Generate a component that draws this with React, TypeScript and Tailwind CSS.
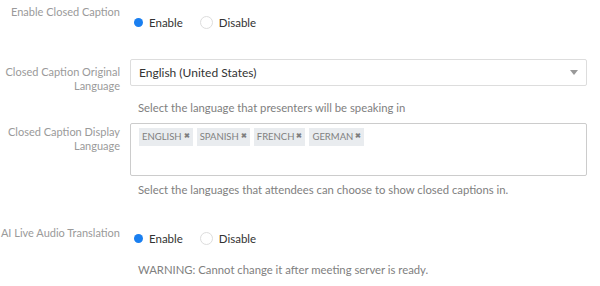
const tags = ['ENGLISH', 'SPANISH', 'FRENCH', 'GERMAN']

function Radio({ checked, label }: { checked?: boolean; label: string }) {
  return (
    <label className="flex items-center gap-[6px] text-[11.5px] text-[#333]">
      {checked ? (
        <span className="w-[9px] h-[9px] rounded-full bg-[#1a7ff0]" />
      ) : (
        <span className="w-[13px] h-[13px] rounded-full border border-[#ddd] bg-white" />
      )}
      {label}
    </label>
  )
}

function Label({ children }: { children: React.ReactNode }) {
  return (
    <div className="w-[120px] shrink-0 text-right whitespace-nowrap text-[11px] leading-[14px] text-[#9a9a9a]">
      {children}
    </div>
  )
}

export default function App() {
  return (
    <div className="w-[600px] h-[286px] bg-white font-['Lato',sans-serif] relative">
      <div className="flex pt-[5px]">
        <Label>Enable Closed Caption</Label>
        <div className="flex items-center gap-[17px] pl-[14px] pt-[9px]">
          <Radio checked label="Enable" />
          <Radio label="Disable" />
        </div>
      </div>

      <div className="flex items-start pt-[28px]">
        <div className="pt-[6px]">
          <Label>
            Closed Caption Original
            <br />
            Language
          </Label>
        </div>
        <div className="ml-[10px] w-[457px]">
          <div className="h-[27px] border border-[#ddd] rounded-[2px] flex items-center justify-between px-[8px] text-[12px] text-[#333]">
            <span>English (United States)</span>
            <span className="w-0 h-0 border-l-[4px] border-r-[4px] border-t-[5px] border-l-transparent border-r-transparent border-t-[#999]" />
          </div>
          <p className="pl-[8px] pt-[14px] text-[11.3px] text-[#808080]">
            Select the language that presenters will be speaking in
          </p>
        </div>
      </div>

      <div className="flex items-start pt-[6px]">
        <div className="pt-[2px]">
          <Label>
            Closed Caption Display
            <br />
            Language
          </Label>
        </div>
        <div className="ml-[10px] w-[457px]">
          <div className="h-[53px] border border-[#ccc] rounded-[2px] px-[8px] pt-[4px] flex gap-[4px] items-start">
            {tags.map((t) => (
              <span
                key={t}
                className="h-[18px] px-[3px] flex items-center gap-[2px] bg-[#e9ecef] text-[9.5px] text-[#808080]"
              >
                {t}
                <span className="text-[7px] font-bold leading-none pb-[4px]">✖</span>
              </span>
            ))}
          </div>
          <p className="pl-[8px] pt-[6px] text-[11.3px] text-[#808080]">
            Select the languages that attendees can choose to show closed captions in.
          </p>
        </div>
      </div>

      <div className="flex pt-[27px]">
        <Label>AI Live Audio Translation</Label>
        <div className="flex items-center gap-[17px] pl-[14px] pt-[4px]">
          <Radio checked label="Enable" />
          <Radio label="Disable" />
        </div>
      </div>
      <p className="pl-[138px] pt-[15px] text-[11.3px] text-[#808080]">
        WARNING: Cannot change it after meeting server is ready.
      </p>
    </div>
  )
}
